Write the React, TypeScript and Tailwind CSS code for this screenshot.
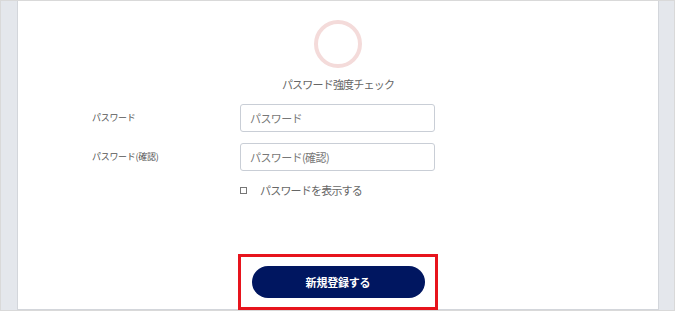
import React from 'react'

const font = { fontFamily: '"Noto Sans CJK JP", "Noto Sans", sans-serif' }

function StrengthRing() {
  return (
    <svg width="52" height="52" viewBox="0 0 52 52">
      <circle cx="26" cy="26" r="22" fill="none" stroke="#f4dbda" strokeWidth="4" />
    </svg>
  )
}

function FieldRow({ label, placeholder }: { label: string; placeholder: string }) {
  return (
    <div className="flex items-center">
      <label className="w-[148px] text-[9px] tracking-[-0.3px] text-[#555]">{label}</label>
      <input
        type="password"
        placeholder={placeholder}
        className="w-[195px] h-[28px] rounded-[3px] border border-[#c9ced6] bg-white px-[9px] text-[11px] tracking-[-0.6px] text-[#333] placeholder:text-[#777] outline-none"
      />
    </div>
  )
}

export default function App() {
  return (
    <div
      className="w-[675px] h-[311px] flex bg-[#e4e7ec] border border-[#d9d9d9] pl-[16px] pr-[15px] overflow-hidden"
      style={font}
    >
      <div className="flex-1 bg-white border-x border-b border-[#d3d6db] flex flex-col items-center">
        {/* Strength check */}
        <div className="mt-[17px]">
          <StrengthRing />
        </div>
        <p className="mt-[7px] text-[11px] tracking-[-0.8px] text-[#666] leading-[15px]">パスワード強度チェック</p>

        {/* Form */}
        <div className="self-start ml-[74px] mt-[12px] flex flex-col gap-[11px]">
          <FieldRow label="パスワード" placeholder="パスワード" />
          <FieldRow label="パスワード(確認)" placeholder="パスワード(確認)" />
          <div className="flex items-center ml-[148px]">
            <span className="w-[7px] h-[7px] border border-[#777] mr-[13px]" />
            <span className="text-[11px] tracking-[-0.8px] text-[#666]">パスワードを表示する</span>
          </div>
        </div>

        {/* Submit */}
        <div className="mt-auto mb-[-1px] ml-[-1px] w-[200px] h-[56px] border-[3px] border-[#e7141d] pl-[11px] pt-[9px]">
          <button className="w-[173px] h-[32px] rounded-full bg-[#001660] text-white text-[11px] tracking-[-0.2px] font-bold">
            新規登録する
          </button>
        </div>
      </div>
    </div>
  )
}
